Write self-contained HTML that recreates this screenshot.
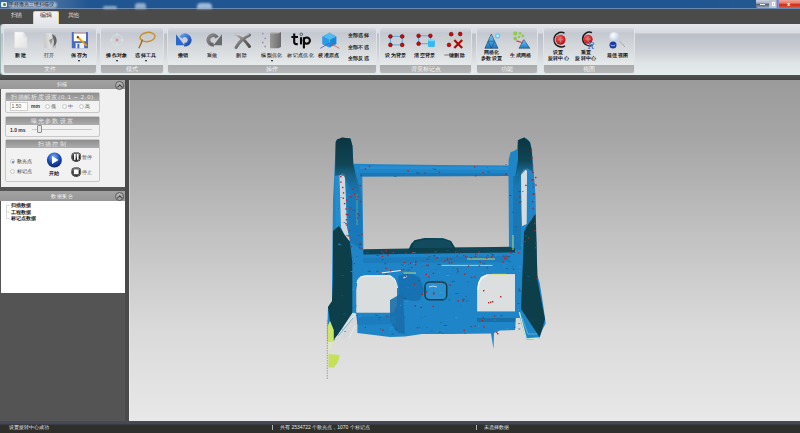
<!DOCTYPE html>
<html><head><meta charset="utf-8">
<style>
*{margin:0;padding:0;box-sizing:border-box}
html,body{width:800px;height:433px;overflow:hidden;background:#545454;font-family:"Liberation Sans",sans-serif}
.a{position:absolute}
#title{left:0;top:0;width:800px;height:9px;background:linear-gradient(90deg,#3a6a9c 0,#3f6b9d 60px,#1f5590 90px,#1f5692 240px,#1f5590 700px,#24588f 760px);border-bottom:1px solid #6a8ab0}
#tabs{left:0;top:9px;width:800px;height:15px;background:#4b4b4b}
#ribbon{left:1px;top:23.6px;width:799px;height:51.4px;border-radius:3px 0 0 3px;background:linear-gradient(#e4e6ea 0,#d8dbe0 8.5px,#babfc8 10.5px,#c9ccd2 24.5px,#dfe4e6 39.5px,#e6eded 51.4px);box-shadow:-1px 0 0 #9ab4b4}
.grp{position:absolute;top:28px;height:45px;border-radius:2px;background:linear-gradient(#d6d9de 0,#c4c8d0 5px,#d6d9dc 20px,#e6e9ea 36px);box-shadow:0 0 0 1px #dfe2e6}
.glab{position:absolute;left:0;right:0;bottom:0;height:8px;background:linear-gradient(#a9abad,#b4b6b8);color:#f4f4f4;font-size:6px;line-height:8px;text-align:center;border-radius:0 0 2px 2px}
.t{position:absolute;font-size:6px;line-height:7px;color:#222;white-space:nowrap}
#sep{left:0;top:75px;width:800px;height:5px;background:linear-gradient(#505050 0,#4c4c4c 2px,#444 5px)}
#view{left:129px;top:80px;width:671px;height:341px;background:linear-gradient(#9b9b9b 0,#a6a6a6 60px,#c3c3c3 160px,#dadada 250px,#e8e8e8 341px);border-left:1px solid rgba(255,255,255,0.35)}
#status{left:0;top:421px;width:800px;height:12px;background:linear-gradient(#474b59 0,#434756 3px,#2f302c 4px,#2e2f2b 12px)}

.ph{position:absolute;left:0;width:125px;height:9px;background:linear-gradient(#a2a2a2,#979797);color:#f8f8f8;font-size:5px;letter-spacing:0.6px;line-height:9px;text-align:center}
.pb{position:absolute;left:1px;width:124px;background:#f0f0f0}
.gb{position:absolute;left:5px;width:95px;border:1px solid #c8c8c8;border-radius:2px;background:#f2f2f2}
.gh{position:absolute;left:0;top:0;right:0;height:8px;background:linear-gradient(#8e8e8e,#adadad);color:#e8e8e8;font-size:6px;line-height:8px;text-align:center;letter-spacing:1.3px}
.circ{position:absolute;width:9px;height:9px;border:1px solid #5a5a5a;border-radius:50%;background:linear-gradient(#b8b8b8,#a0a0a0)}.circ:after{content:'';position:absolute;left:2.2px;top:3px;width:2.6px;height:2.6px;border-left:0.8px solid #444;border-top:0.8px solid #444;transform:rotate(45deg)}
.rad{position:absolute;width:5px;height:5px;border:1px solid #c8c8c8;border-radius:50%;background:#f8f8f8}

.tab{position:absolute;top:11px;height:13px;color:#d8d8d8;font-size:6px;line-height:9px;text-align:center;letter-spacing:-0.2px}
.bl{position:absolute;font-size:5px;line-height:6px;letter-spacing:0.4px;color:#101010;-webkit-text-stroke:0.15px #101010;white-space:nowrap;transform:translateX(-50%)}
.dis{color:#9a9a9a}
.arr{position:absolute;width:0;height:0;border-left:1.5px solid transparent;border-right:1.5px solid transparent;border-top:2px solid #111}
</style></head><body>
<div class="a" id="title"></div>
<div class="a" id="tabs"></div>
<div class="a" id="ribbon"></div>
<div class="a" style="left:1px;top:2px;width:6px;height:5px;background:#e8eef0;border-radius:1px"><div class="a" style="left:1.5px;top:1px;width:3px;height:3px;border-radius:50%;background:#3a8a5a"></div></div>
<div class="a" style="left:9px;top:1.5px;width:48px;height:6px;background:#b8c8dc;border-radius:3px;filter:blur(1.2px);opacity:0.85"></div><div class="a" style="left:103px;top:6px;width:14px;height:3px;background:#c0d0e0;border-radius:3px;filter:blur(1px);opacity:0.7"></div><div class="a" style="left:135px;top:3px;width:11px;height:6px;background:#b8cce0;border-radius:3px 3px 0 0;filter:blur(0.8px);opacity:0.75"></div><div class="a" style="left:197px;top:3px;width:15px;height:6px;background:#c0d4e8;border-radius:4px 4px 0 0;filter:blur(0.8px);opacity:0.8"></div>
<div class="t" style="left:9px;top:1px;color:#0a0f18;font-size:5px;line-height:7px">手持激光三维扫描仪</div>
<div class="a" style="left:756px;top:0;width:12.5px;height:7.5px;background:linear-gradient(#ccd4e0 0,#aab4c4 35%,#5a6478 55%,#7a889e 80%,#a8b4c8 100%);border-radius:0 0 0 2px"></div>
<div class="a" style="left:760px;top:3.5px;width:5px;height:1.5px;background:#fff"></div>
<div class="a" style="left:768.5px;top:0;width:11px;height:7.5px;background:linear-gradient(90deg,#b8c0cc 0,#c0c8d0 60%,#6a70c8 80%,#c8d0d8 100%)"></div>
<div class="a" style="left:771.8px;top:2px;width:3.6px;height:3.8px;border:1px solid #fff"></div>
<div class="a" style="left:779.4px;top:0;width:20.6px;height:7.5px;background:linear-gradient(#f0a898 0,#e88070 35%,#d02810 60%,#e06048 100%)"></div>
<div class="t" style="left:787px;top:-0.5px;color:#fff;font-size:6px;line-height:8px;font-weight:bold">x</div>
<div class="tab" style="left:4px;width:25px">扫描</div>
<div class="a" style="left:33px;top:11px;width:26px;height:13px;background:linear-gradient(#f2f2f6,#e4e6ea);border:1px solid #e2d27a;border-bottom:none;border-radius:2px 2px 0 0"></div>
<div class="tab" style="left:33px;width:26px;color:#2a2a2a">编辑</div>
<div class="tab" style="left:61px;width:25px">其他</div>

<div class="grp" style="left:4px;width:91.5px"><div class="glab">文件</div></div>
<div class="grp" style="left:100.5px;width:62.5px"><div class="glab">模式</div></div>
<div class="grp" style="left:167.5px;width:208.2px"><div class="glab">操作</div></div>
<div class="grp" style="left:380.2px;width:90.80000000000001px"><div class="glab">背景标记点</div></div>
<div class="grp" style="left:476.7px;width:60.80000000000001px"><div class="glab">功能</div></div>
<div class="grp" style="left:543.5px;width:90.0px"><div class="glab">视图</div></div>
<div class="bl " style="left:20.8px;top:51.8px">新建</div>
<div class="bl dis" style="left:49px;top:51.8px">打开</div>
<div class="bl " style="left:79.6px;top:51.8px">保存为</div>
<div class="bl " style="left:117px;top:51.8px">操作对象</div>
<div class="bl " style="left:146px;top:51.8px">选择工具</div>
<div class="bl " style="left:183px;top:51.8px">撤销</div>
<div class="bl dis" style="left:212.5px;top:51.8px">重做</div>
<div class="bl dis" style="left:241.7px;top:51.8px">删除</div>
<div class="bl dis" style="left:272px;top:51.8px">模型优化</div>
<div class="bl dis" style="left:300.7px;top:51.8px">标记点优化</div>
<div class="bl " style="left:329px;top:51.8px">校准原点</div>
<div class="bl " style="left:396px;top:51.8px">设为背景</div>
<div class="bl " style="left:425px;top:51.8px">清空背景</div>
<div class="bl " style="left:454.5px;top:51.8px">一键删除</div>
<div class="bl " style="left:521px;top:51.8px">生成网格</div>
<div class="bl " style="left:617.7px;top:51.8px">最佳视图</div>
<div class="bl" style="left:491.7px;top:49.2px">网格化</div><div class="bl" style="left:491.7px;top:54.8px">参数设置</div>
<div class="bl" style="left:558.5px;top:49.2px">设置</div><div class="bl" style="left:558.5px;top:54.8px">旋转中心</div>
<div class="bl" style="left:586px;top:49.2px">重置</div><div class="bl" style="left:586px;top:54.8px">旋转中心</div>
<div class="bl" style="left:358.5px;top:32px">全部选择</div>
<div class="bl" style="left:358.5px;top:43.7px">全部不选</div>
<div class="bl" style="left:358.5px;top:54.5px">全部反选</div>
<div class="arr" style="left:78.1px;top:60px"></div>
<div class="arr" style="left:115.5px;top:60px"></div>
<div class="arr" style="left:144.5px;top:60px"></div>
<div class="arr" style="left:270.5px;top:60px"></div>
<svg class="a" style="left:0;top:0" width="800" height="80" viewBox="0 0 800 80">
<defs>
<linearGradient id="gdoc" x1="0" y1="0" x2="1" y2="1"><stop offset="0" stop-color="#fbfbfb"/><stop offset="1" stop-color="#e2e2e2"/></linearGradient>
<linearGradient id="gfold" x1="0" y1="0" x2="1" y2="0"><stop offset="0" stop-color="#c8c8c8"/><stop offset="0.5" stop-color="#e0e0e0"/><stop offset="1" stop-color="#b8b8b8"/></linearGradient>
<linearGradient id="gundo" x1="0" y1="0" x2="1" y2="1"><stop offset="0" stop-color="#5a9af0"/><stop offset="1" stop-color="#1848b0"/></linearGradient>
<linearGradient id="gredo" x1="0" y1="0" x2="1" y2="1"><stop offset="0" stop-color="#8a8a8a"/><stop offset="1" stop-color="#5a5a5a"/></linearGradient>
<linearGradient id="gx" x1="0" y1="0" x2="1" y2="1"><stop offset="0" stop-color="#c0c0c0"/><stop offset="0.5" stop-color="#707070"/><stop offset="1" stop-color="#505050"/></linearGradient>
<linearGradient id="gbox" x1="0" y1="0" x2="1" y2="0"><stop offset="0" stop-color="#9a9a9a"/><stop offset="1" stop-color="#6a6a6a"/></linearGradient>
<linearGradient id="gcube" x1="0" y1="0" x2="0" y2="1"><stop offset="0" stop-color="#40b0f0"/><stop offset="1" stop-color="#1878d0"/></linearGradient>
<linearGradient id="gtri" x1="0" y1="0" x2="0" y2="1"><stop offset="0" stop-color="#70d0f8"/><stop offset="1" stop-color="#1878c8"/></linearGradient>
<radialGradient id="gred" cx="0.4" cy="0.35" r="0.7"><stop offset="0" stop-color="#ff6060"/><stop offset="1" stop-color="#c00000"/></radialGradient>
<radialGradient id="gglass" cx="0.4" cy="0.35" r="0.7"><stop offset="0" stop-color="#ffffff"/><stop offset="1" stop-color="#b8c8e0"/></radialGradient>
</defs>
<!-- new doc -->
<path d="M14.7 31.9 H23.3 L26.9 37.7 V47.7 H14.7 Z" fill="url(#gdoc)" stroke="#e6e6e6" stroke-width="0.4"/>
<path d="M23.3 31.9 V37.7 H26.9" fill="#d8d8d8" opacity="0.6"/>
<!-- open folder disabled -->
<path d="M44 33 H52 L56 35 V48.3 H44 Z" fill="url(#gfold)"/>
<path d="M52 34 Q58.5 37 56 44 L53 47 Q55 42 53 38 Z" fill="#555" opacity="0.85"/>
<path d="M49 40 L53 38 L51 45 Z" fill="#777" opacity="0.7"/>
<!-- save as floppy -->
<rect x="71.8" y="32" width="16.2" height="16.3" fill="#4a68c8" rx="0.6"/>
<rect x="73.8" y="32.6" width="12.2" height="8.6" fill="#fbfbf8"/>
<rect x="73.8" y="32.6" width="12.2" height="1.4" fill="#f0b070"/>
<rect x="75.6" y="43" width="8.6" height="5.3" fill="#eef0f8"/>
<rect x="77.4" y="43.8" width="2" height="4.5" fill="#4a68c8"/>
<path d="M77.2 36.5 L86.8 45.8" stroke="#e8a010" stroke-width="1.8"/>
<path d="M77.2 36.5 L78.5 37.8" stroke="#604020" stroke-width="1.8"/>
<!-- crosshair faint -->
<circle cx="117" cy="40" r="5.5" fill="none" stroke="#d8e0e0" stroke-width="1"/>
<path d="M117 33 V47 M110 40 H124" stroke="#dde6e6" stroke-width="0.7"/>
<circle cx="117" cy="40" r="1.5" fill="#d888a8"/>
<!-- lasso -->
<ellipse cx="147.5" cy="37" rx="7.5" ry="4.6" fill="none" stroke="#c89028" stroke-width="1.4" transform="rotate(-8 147.5 37)"/>
<path d="M142.5 39.5 Q141 44 138.8 48.3" stroke="#a06818" stroke-width="1.3" fill="none"/>
<!-- undo -->
<path d="M180.9,37.6 A4.7,4.7 0 1 1 184.2,44.6" fill="none" stroke="url(#gundo)" stroke-width="3.8"/>
<path d="M176,34.2 L176,45.3 L184.5,45.3 Z" fill="#2a68d0"/>
<!-- redo -->
<path d="M217.1,37.6 A4.7,4.7 0 1 0 213.8,44.6" fill="none" stroke="url(#gredo)" stroke-width="3.8"/>
<path d="M222,34.2 L222,45.3 L213.5,45.3 Z" fill="#6a6a6a"/>
<!-- delete X -->
<path d="M235.5,34 Q243,37.5 249.5,46.5" fill="none" stroke="url(#gx)" stroke-width="3" stroke-linecap="round"/>
<path d="M249.5,35 Q241,38.5 236,47.5" fill="none" stroke="url(#gx)" stroke-width="3" stroke-linecap="round"/>
<path d="M236,33.8 Q240,35 243,37" fill="none" stroke="#e0e0e0" stroke-width="0.8" stroke-linecap="round"/>
<path d="M248.5,34.6 Q246,35 243.5,36.5" fill="none" stroke="#d8d8d8" stroke-width="0.8" stroke-linecap="round"/>
<!-- model optimize -->
<g fill="#9a9a9a"><circle cx="262.8" cy="33.6" r="0.9"/><circle cx="265.2" cy="38.3" r="0.9"/><circle cx="262.8" cy="42.5" r="0.9"/><circle cx="265.2" cy="46.5" r="0.9"/></g>
<path d="M270 33.5 L272.5 32.1 H281 V47 L278.5 48.3 H270 Z" fill="url(#gbox)"/>
<path d="M270 33.5 L272.5 32.1 H281 L278.5 33.5 Z" fill="#b8b8b8"/>
<path d="M270 36.5 H278.5 M270 41 H278.5" stroke="#858585" stroke-width="0.4"/>
<!-- tip -->
<path d="M294.2,33.5 V42.2 Q294.2,44.3 297.8,44.1 M291.4,37 H298" stroke="#0a0a0a" stroke-width="2.1" fill="none"/>
<path d="M301,37.2 V44.4" stroke="#0a0a0a" stroke-width="2.1"/>
<circle cx="301.3" cy="34.3" r="1.3" fill="none" stroke="#505050" stroke-width="0.9"/>
<path d="M303.9,37.2 V48.4" stroke="#0a0a0a" stroke-width="2.1"/>
<circle cx="306.8" cy="40.6" r="3.1" fill="none" stroke="#0a0a0a" stroke-width="2.1"/>
<!-- cube -->
<path d="M329.5,33 L336.4,36.5 V44 L329.5,47.5 L322.5,44 V36.5 Z" fill="#1c86d8"/>
<path d="M329.5,33 L336.4,36.5 L329.5,40 L322.5,36.5 Z" fill="#4cbaf4"/>
<path d="M322.5,36.5 L329.5,40 V47.5 L322.5,44 Z" fill="#2a9ce6"/>
<path d="M329.6,32 V43" stroke="#50e060" stroke-width="0.8"/>
<path d="M329.6,43 L339.4,48.3" stroke="#e05050" stroke-width="0.8"/>
<path d="M329.6,43 L320.3,48.3" stroke="#5050d0" stroke-width="0.8"/>
<!-- set background -->
<path d="M390.4 36.4 H402.2 V44.9 H390.4 Z" fill="none" stroke="#48a8e0" stroke-width="0.9"/>
<g fill="#e00000" stroke="#400000" stroke-width="0.5"><circle cx="390.4" cy="36.4" r="1.9"/><circle cx="402.2" cy="36.4" r="1.9"/><circle cx="390.4" cy="44.9" r="1.9"/><circle cx="402.2" cy="44.9" r="1.9"/></g>
<!-- clear background -->
<path d="M418.6 35.8 H430.4 V42 M418.6 35.8 V43.7 H428" fill="none" stroke="#48a8e0" stroke-width="0.9"/>
<rect x="428" y="40" width="6.9" height="7.1" rx="1" fill="#38b8f0"/>
<ellipse cx="431.4" cy="40.3" rx="3.4" ry="1" fill="#70d8ff"/>
<g fill="#e00000" stroke="#400000" stroke-width="0.5"><circle cx="418.6" cy="35.8" r="1.9"/><circle cx="430.4" cy="35.8" r="1.9"/><circle cx="418.6" cy="43.7" r="1.9"/></g>
<!-- one-key delete -->
<g fill="#b8d870"><circle cx="447" cy="38.5" r="0.7"/><circle cx="450" cy="39.5" r="0.7"/><circle cx="453" cy="38" r="0.7"/><circle cx="457" cy="37.5" r="0.7"/><circle cx="461" cy="38.8" r="0.7"/><circle cx="452" cy="42" r="0.7"/><circle cx="462" cy="42" r="0.7"/></g>
<g fill="#e00000" stroke="#400000" stroke-width="0.5"><circle cx="451.2" cy="34.2" r="1.9"/><circle cx="460.2" cy="34" r="1.9"/><circle cx="449" cy="44.9" r="1.9"/></g>
<path d="M454.3 40 L462.2 48 M462.2 40 L454.3 48" stroke="#b00808" stroke-width="2.2"/>
<!-- mesh params -->
<path d="M491.3 34 L498 48.3 H484.9 Z" fill="url(#gtri)" stroke="#20405a" stroke-width="0.6"/>
<path d="M488.1 41.2 H494.6 L491.3 48.3 Z" fill="none" stroke="#20405a" stroke-width="0.5"/>
<circle cx="497.6" cy="35.9" r="2.6" fill="#68c8f0"/><circle cx="497.6" cy="35.9" r="1.1" fill="#f4fbff"/>
<!-- generate mesh -->
<g fill="#8ccc48"><circle cx="515.3" cy="33.6" r="2.1"/><circle cx="520.1" cy="33.3" r="1.4"/><circle cx="522.8" cy="35.9" r="1.4"/><circle cx="519" cy="37" r="1.2"/><circle cx="515.3" cy="38.6" r="1.9"/></g>
<path d="M516.5 41 Q519.5 41.5 521.5 42.5" stroke="#e04040" stroke-width="1.3" fill="none"/>
<path d="M523 40 L525.5 43 L521 44 Z" fill="#f02020"/>
<path d="M523.9 39.5 L529.9 48.3 H519 Z" fill="url(#gtri)" stroke="#20405a" stroke-width="0.5"/>
<!-- set rotation center -->
<path d="M564.5,33.2 A7.2,7.2 0 1 0 565,45.8" fill="none" stroke="#1a1a1a" stroke-width="1.5"/>
<path d="M563,35.3 A5.2,5.2 0 1 0 563.4,43.8" fill="none" stroke="#a0a0a0" stroke-width="0.7"/>
<circle cx="560.6" cy="39.8" r="4.9" fill="url(#gred)"/>
<path d="M560.6,37 V42.6 M557.8,39.8 H563.4" stroke="#b09090" stroke-width="1.1"/>
<!-- reset rotation center -->
<path d="M592,32.6 A6.8,6.8 0 1 0 592.5,45" fill="none" stroke="#1a1a1a" stroke-width="1.4"/>
<circle cx="588.1" cy="39.2" r="4.5" fill="url(#gred)"/>
<path d="M588.1,36.6 V41.8 M585.5,39.2 H590.7" stroke="#b09090" stroke-width="1"/>
<text x="587.5" y="48.8" font-family="Liberation Serif" font-style="italic" font-size="11" fill="#3a70c8">R</text>
<!-- best view -->
<path d="M619.6,41 L625,47" stroke="#a8a8a8" stroke-width="1"/>
<circle cx="614.2" cy="36.9" r="5" fill="url(#gglass)"/>
<circle cx="613" cy="45" r="3.5" fill="#1a3aa0"/>
<path d="M611,44.5 L612,46.2 L613,45 L614,46.2 L615,44.5" stroke="#e0e8ff" stroke-width="0.6" fill="none"/>
</svg>
<div class="a" id="sep"></div>
<div class="a" style="left:125px;top:80px;width:4px;height:341px;background:#4a4a4a"></div><div class="a" id="view"></div>
<!--MODEL--><svg class="a" style="left:0;top:0" width="800" height="433" viewBox="0 0 800 433">
<defs><linearGradient id="dkp" x1="0" y1="0" x2="0" y2="1"><stop offset="0" stop-color="#0c3440"/><stop offset="0.4" stop-color="#104656"/><stop offset="1" stop-color="#1f88cc" stop-opacity="0.1"/></linearGradient></defs>
<path fill-rule="evenodd" fill="#1e85c8" d="M335.7,142 L337,139.5 L340,138.8 L342.2,137.6 L347,138.2 L350.5,138.6 L352.5,146 L353.3,163.8 L380,164.2 L440,165 L508.6,165.5 L508.6,160 L510.5,152.3 L514,151 L517,149 L517.9,140.3 L521,138.5 L524.4,137.6 L528,139.5 L530,142.2 L531.8,150 L533.5,170 L535.5,195 L536.4,240 L537.3,275 L539.7,283 L543,303.9 L545.7,323.2 L541.5,331.5 L539.5,338.5 L526.3,339.9 L520,318 L516,318 L515,330 L500,330.5 L494,333 L493.5,349 L491,333.5 L450,334 L422,334 L405,336.5 L390,336.9 L357.4,333.1 L357.4,325 L356,313 L352.3,312.8 L333.3,341 L327.7,341.5 L327.5,321.7 L328,307 L332,301.4 L332,280 L333,200 L334.3,175 Z M362.3,176.4 L508.5,176 L509,247.3 L454.7,247.3 L451,241 L443,238.2 L425,238 L414.6,240.3 L408.6,249 L363.4,250 Z M339.5,176 L341.5,173.3 L344.7,174 L346.8,227 L349.9,241.8 L347.5,242 L341,227 Z M521,174 L524,168.5 L527,171 L526.5,224 L522,226 Z M356.5,290 L357.5,281 L361,276.5 L366,275.6 L390,275.6 L395,279 L397,288 L397,305 L393,312.4 L356.5,312.4 Z M477.3,292 L478,283 L481,277 L487,274.3 L515,274.3 L515,311.2 L477.3,311.2 Z"/>
<path fill="#d9dddd" d="M356.5,290 L357.5,281 L361,276.5 L366,275.6 L390,275.6 L395,279 L397,288 L397,305 L393,312.4 L356.5,312.4 Z"/><path fill="#dcdfdf" d="M477.3,292 L478,283 L481,277 L487,274.3 L515,274.3 L515,311.2 L477.3,311.2 Z"/><path fill="#d0d8dc" d="M339.5,176 L341.5,173.3 L344.7,174 L346.8,227 L349.9,241.8 L347.5,242 L341,227 Z"/><path fill="#d4dce0" d="M521,174 L524,168.5 L527,171 L526.5,224 L522,226 Z"/>
<path fill="#1a78b8" opacity="0.8" d="M363,258 L510,256 L510,262 L363,263 Z"/>
<path fill="#2a92d4" opacity="0.7" d="M360,166 L508,167 L508,170 L360,169 Z"/>
<path fill="#1870b0" opacity="0.7" d="M360,173 L508,173.5 L508,176 L360,176.4 Z"/>
<path fill="#1670b0" opacity="0.9" d="M398,276 Q410,270 420,278 L424,290 L420,300 Q408,303 399,296 Z"/>
<path fill="#1a6ea8" opacity="0.9" d="M390,300 L397,296 L403,292 L405,334 L398,333 L390,322 Z"/>
<path fill="#1a78b8" opacity="0.6" d="M357,317 L396,316 L396,324 L357,325 Z"/>
<path fill="#176aa0" opacity="0.8" d="M477,318 L515,318 L515,322 L477,322 Z"/>
<path fill="#2a96d8" opacity="0.5" d="M335,175 L339.5,176 L341,227 L336,232 Z"/>
<path fill="#1670b0" opacity="0.6" d="M346,180 L355,176 L362,200 L362,250 L350,242 Z"/>
<path fill="#1870a8" opacity="0.7" d="M513,176 L521,176 L521,250 L513,250 Z"/>
<path fill="#0d3f4b" d="M333,231 L339,226 L344,234 L349.9,241.8 L352.3,262 L352.3,312.8 L333.7,341 L333.7,330 L330,321 L328,307 L332,301 L333,280 Z"/>
<path fill="#0d3f4b" d="M524,232 L527,226 L535.5,214 L536.4,240 L537.5,280 L542,304 L545,319 L541.5,331.5 L539.5,337 L521,309 L523,260 Z"/>
<path fill="#0d3f4b" d="M408.6,250 L411,244 L414.6,240.3 L425,238 L443,238.2 L451,241 L454.7,247 L456,252 L408,253 Z"/>
<path fill="#16506a" opacity="0.7" d="M412,248 L414.6,242 L425,239.5 L443,239.5 L450,242 L453,248 Z"/>
<path fill="url(#dkp)" d="M335.7,142 L337,139.5 L342.2,137.6 L350.5,138.6 L352.5,146 L353.3,163.8 L356,176 L362,194 L362,206 L350,188 L344,176 L339,175 L335,176 Z"/>
<path fill="url(#dkp)" d="M517.9,140.3 L524.4,137.6 L530,142.2 L531.8,150 L533,172 L527,168 L521,175 L515,196 L514,182 L518,160 Z"/>
<path fill="#0d3f4b" d="M363.4,249.2 L509,246.8 L515,248.5 L515,252.5 L363.4,254.5 Z" opacity="0.92"/>
<rect x="425" y="282" width="21.7" height="17.7" rx="4.5" fill="#2a90d0" stroke="#0d3f4b" stroke-width="1.5"/>
<path d="M429,287 Q433,285 437,287" stroke="#d8eef8" stroke-width="0.8" fill="none"/>
<path d="M355,315 L357.4,325 L349,337.5 L340,339 Z" fill="#d6d8d8"/>
<path d="M356,313 L334.5,339.4" stroke="#e4f0f2" stroke-width="0.9"/><path d="M355.5,325.5 L348.5,338.2" stroke="#e0f0f4" stroke-width="1"/><path d="M353,318 L338,336" stroke="#58a8d0" stroke-width="0.8"/>
<path d="M357,283 Q358,276.5 364,276 L390,275.8 Q396,278 397.5,288" stroke="#eef6f8" stroke-width="1" fill="none"/>
<path d="M380.7,273 L401,270.5 M403.5,278 L407,276" stroke="#e8f4f8" stroke-width="1.1" fill="none"/>
<path d="M478,290 Q478.5,277 487,275.5" stroke="#f0f8f8" stroke-width="1.2" fill="none"/>
<path d="M519.4,312.2 L526.3,339 L539.5,338" stroke="#c8e8d0" stroke-width="1.3" fill="none"/><path d="M522,318 L528,334 L537,334" stroke="#60b0d0" stroke-width="1" fill="none"/>
<path fill="#cde66a" d="M327.7,341.5 L327.7,326 L330,321 L333.7,330 L333.7,341.5 Z"/><path fill="#e0ecb0" opacity="0.6" d="M327.7,341.5 H333 L331,350 H327.7 Z"/>
<path fill="#c6e05a" d="M328.5,354 L339.7,355 L338,362 L334,367.5 L328.5,367.5 Z"/>
<path d="M327.3,320 V380" stroke="#a07878" stroke-width="0.7" stroke-dasharray="1.5 1"/>
<path d="M467,259 H495 M441.6,265.4 H492.5 M403.5,273 H416 M492,274.3 H507.7 M513,235 V250" stroke="#d8e860" stroke-width="1" opacity="0.85"/><path d="M357,194 V225" stroke="#b8d860" stroke-width="0.6" opacity="0.7"/>
<g opacity="0.8"><rect x="426.5" y="259.2" width="3" height="0.8" fill="#176ca8"/><rect x="437.6" y="263.9" width="3" height="0.8" fill="#0f4a60"/><rect x="462.0" y="298.8" width="3" height="0.8" fill="#135a80"/><rect x="344.4" y="331.0" width="1.5" height="0.8" fill="#176ca8"/><rect x="460.6" y="305.4" width="1" height="0.8" fill="#135a80"/><rect x="343.1" y="313.5" width="3" height="0.8" fill="#135a80"/><rect x="401.3" y="264.5" width="1.5" height="0.8" fill="#0f4a60"/><rect x="391.6" y="333.6" width="2" height="0.8" fill="#135a80"/><rect x="393.8" y="175.9" width="3" height="0.8" fill="#135a80"/><rect x="357.6" y="213.5" width="1" height="0.8" fill="#135a80"/><rect x="505.5" y="164.1" width="1" height="0.8" fill="#0f4a60"/><rect x="430.0" y="330.7" width="3" height="0.8" fill="#176ca8"/><rect x="350.6" y="271.0" width="2" height="0.8" fill="#3aa0e0"/><rect x="353.4" y="220.5" width="1" height="0.8" fill="#176ca8"/><rect x="338.2" y="243.0" width="1.5" height="0.8" fill="#176ca8"/><rect x="437.8" y="331.5" width="3" height="0.8" fill="#0f4a60"/><rect x="390.0" y="329.1" width="1" height="0.8" fill="#3aa0e0"/><rect x="506.9" y="273.1" width="1" height="0.8" fill="#135a80"/><rect x="533.9" y="200.3" width="1" height="0.8" fill="#3aa0e0"/><rect x="354.0" y="263.1" width="1" height="0.8" fill="#0f4a60"/><rect x="426.6" y="327.1" width="1.5" height="0.8" fill="#176ca8"/><rect x="509.3" y="195.1" width="2" height="0.8" fill="#0f4a60"/><rect x="517.7" y="303.0" width="1.5" height="0.8" fill="#0f4a60"/><rect x="367.7" y="270.9" width="3" height="0.8" fill="#0f4a60"/><rect x="512.4" y="266.6" width="1" height="0.8" fill="#176ca8"/><rect x="356.8" y="170.6" width="1.5" height="0.8" fill="#3aa0e0"/><rect x="420.2" y="317.8" width="2" height="0.8" fill="#176ca8"/><rect x="440.0" y="322.0" width="1.5" height="0.8" fill="#135a80"/><rect x="381.7" y="259.1" width="2" height="0.8" fill="#135a80"/><rect x="378.5" y="319.5" width="1" height="0.8" fill="#135a80"/><rect x="348.1" y="194.0" width="1.5" height="0.8" fill="#3aa0e0"/><rect x="354.4" y="187.5" width="2" height="0.8" fill="#176ca8"/><rect x="467.4" y="281.5" width="1" height="0.8" fill="#0f4a60"/><rect x="520.7" y="244.7" width="2" height="0.8" fill="#3aa0e0"/><rect x="528.6" y="167.6" width="3" height="0.8" fill="#135a80"/><rect x="349.5" y="216.9" width="1" height="0.8" fill="#0f4a60"/><rect x="351.1" y="256.8" width="1.5" height="0.8" fill="#135a80"/><rect x="494.7" y="319.6" width="1" height="0.8" fill="#3aa0e0"/><rect x="473.0" y="317.1" width="1" height="0.8" fill="#176ca8"/><rect x="508.7" y="261.4" width="3" height="0.8" fill="#176ca8"/><rect x="452.5" y="267.5" width="1" height="0.8" fill="#135a80"/><rect x="463.9" y="332.9" width="2" height="0.8" fill="#176ca8"/><rect x="413.7" y="289.0" width="3" height="0.8" fill="#176ca8"/><rect x="428.5" y="256.0" width="2" height="0.8" fill="#135a80"/><rect x="435.5" y="268.5" width="2" height="0.8" fill="#176ca8"/><rect x="515.3" y="226.6" width="1.5" height="0.8" fill="#0f4a60"/><rect x="439.7" y="292.1" width="3" height="0.8" fill="#3aa0e0"/><rect x="462.8" y="300.6" width="1.5" height="0.8" fill="#0f4a60"/><rect x="412.9" y="263.1" width="1.5" height="0.8" fill="#3aa0e0"/><rect x="478.2" y="325.5" width="1.5" height="0.8" fill="#3aa0e0"/><rect x="358.6" y="244.1" width="3" height="0.8" fill="#0f4a60"/><rect x="412.5" y="252.4" width="3" height="0.8" fill="#3aa0e0"/><rect x="400.1" y="304.9" width="1" height="0.8" fill="#3aa0e0"/><rect x="406.8" y="274.4" width="1.5" height="0.8" fill="#135a80"/><rect x="532.8" y="183.6" width="2" height="0.8" fill="#135a80"/><rect x="527.7" y="280.4" width="3" height="0.8" fill="#0f4a60"/><rect x="487.0" y="254.9" width="1.5" height="0.8" fill="#135a80"/><rect x="443.9" y="325.0" width="3" height="0.8" fill="#0f4a60"/><rect x="514.5" y="230.0" width="3" height="0.8" fill="#176ca8"/><rect x="375.4" y="314.8" width="3" height="0.8" fill="#135a80"/><rect x="446.0" y="275.0" width="3" height="0.8" fill="#3aa0e0"/><rect x="401.3" y="331.0" width="1" height="0.8" fill="#135a80"/><rect x="378.7" y="317.0" width="2" height="0.8" fill="#135a80"/><rect x="443.4" y="298.4" width="2" height="0.8" fill="#3aa0e0"/><rect x="518.0" y="309.5" width="1" height="0.8" fill="#3aa0e0"/><rect x="343.4" y="222.1" width="2" height="0.8" fill="#176ca8"/><rect x="433.5" y="168.8" width="3" height="0.8" fill="#135a80"/><rect x="403.0" y="297.9" width="3" height="0.8" fill="#0f4a60"/><rect x="365.7" y="251.8" width="3" height="0.8" fill="#176ca8"/><rect x="451.8" y="281.1" width="3" height="0.8" fill="#0f4a60"/><rect x="481.8" y="272.6" width="2" height="0.8" fill="#3aa0e0"/><rect x="470.3" y="326.3" width="2" height="0.8" fill="#0f4a60"/><rect x="506.2" y="328.6" width="3" height="0.8" fill="#3aa0e0"/><rect x="376.2" y="255.1" width="3" height="0.8" fill="#135a80"/><rect x="341.6" y="328.8" width="1" height="0.8" fill="#176ca8"/><rect x="434.2" y="281.5" width="3" height="0.8" fill="#135a80"/><rect x="418.8" y="326.7" width="2" height="0.8" fill="#176ca8"/><rect x="403.9" y="317.2" width="2" height="0.8" fill="#176ca8"/><rect x="357.7" y="235.3" width="2" height="0.8" fill="#135a80"/><rect x="340.6" y="197.0" width="1" height="0.8" fill="#0f4a60"/><rect x="407.1" y="269.4" width="3" height="0.8" fill="#135a80"/><rect x="375.5" y="254.2" width="1" height="0.8" fill="#176ca8"/><rect x="376.9" y="271.3" width="1.5" height="0.8" fill="#0f4a60"/><rect x="506.3" y="268.0" width="1.5" height="0.8" fill="#0f4a60"/><rect x="519.0" y="270.7" width="1.5" height="0.8" fill="#3aa0e0"/><rect x="520.6" y="201.1" width="1" height="0.8" fill="#0f4a60"/><rect x="355.4" y="305.5" width="1.5" height="0.8" fill="#176ca8"/><rect x="376.1" y="270.8" width="1" height="0.8" fill="#135a80"/><rect x="518.3" y="328.6" width="2" height="0.8" fill="#135a80"/><rect x="436.6" y="280.6" width="1" height="0.8" fill="#0f4a60"/><rect x="432.4" y="168.1" width="1.5" height="0.8" fill="#176ca8"/><rect x="355.3" y="230.5" width="2" height="0.8" fill="#176ca8"/><rect x="422.0" y="266.2" width="1" height="0.8" fill="#135a80"/><rect x="426.8" y="289.7" width="1.5" height="0.8" fill="#176ca8"/><rect x="353.0" y="307.1" width="1.5" height="0.8" fill="#176ca8"/><rect x="436.9" y="331.1" width="2" height="0.8" fill="#3aa0e0"/><rect x="518.3" y="290.6" width="3" height="0.8" fill="#0f4a60"/><rect x="356.2" y="315.0" width="1.5" height="0.8" fill="#135a80"/><rect x="390.6" y="327.4" width="2" height="0.8" fill="#3aa0e0"/><rect x="415.1" y="261.7" width="1" height="0.8" fill="#135a80"/><rect x="416.3" y="172.6" width="3" height="0.8" fill="#0f4a60"/><rect x="338.2" y="208.0" width="2" height="0.8" fill="#3aa0e0"/><rect x="446.0" y="250.3" width="3" height="0.8" fill="#135a80"/><rect x="455.5" y="293.1" width="3" height="0.8" fill="#135a80"/><rect x="522.0" y="191.2" width="1.5" height="0.8" fill="#176ca8"/><rect x="507.1" y="256.1" width="3" height="0.8" fill="#135a80"/><rect x="525.1" y="235.5" width="2" height="0.8" fill="#176ca8"/><rect x="467.0" y="259.3" width="2" height="0.8" fill="#3aa0e0"/><rect x="341.4" y="295.3" width="1.5" height="0.8" fill="#135a80"/><rect x="417.8" y="280.3" width="2" height="0.8" fill="#135a80"/><rect x="485.7" y="172.5" width="1" height="0.8" fill="#3aa0e0"/><rect x="487.1" y="171.7" width="3" height="0.8" fill="#135a80"/><rect x="364.9" y="327.2" width="1" height="0.8" fill="#0f4a60"/><rect x="346.1" y="234.9" width="1.5" height="0.8" fill="#135a80"/><rect x="456.2" y="272.7" width="2" height="0.8" fill="#176ca8"/><rect x="491.6" y="254.2" width="2" height="0.8" fill="#0f4a60"/><rect x="358.8" y="315.8" width="2" height="0.8" fill="#3aa0e0"/><rect x="449.0" y="264.6" width="1.5" height="0.8" fill="#3aa0e0"/><rect x="531.9" y="319.7" width="1" height="0.8" fill="#135a80"/><rect x="337.9" y="208.1" width="1" height="0.8" fill="#135a80"/><rect x="356.5" y="256.1" width="1" height="0.8" fill="#135a80"/><rect x="518.6" y="191.3" width="2" height="0.8" fill="#0f4a60"/><rect x="503.3" y="265.4" width="1.5" height="0.8" fill="#3aa0e0"/><rect x="355.4" y="312.8" width="1" height="0.8" fill="#135a80"/><rect x="422.4" y="260.6" width="2" height="0.8" fill="#176ca8"/><rect x="500.7" y="165.6" width="1.5" height="0.8" fill="#3aa0e0"/><rect x="518.1" y="266.6" width="3" height="0.8" fill="#3aa0e0"/><rect x="407.6" y="287.4" width="1" height="0.8" fill="#3aa0e0"/><rect x="455.0" y="317.4" width="3" height="0.8" fill="#3aa0e0"/><rect x="442.0" y="332.7" width="2" height="0.8" fill="#176ca8"/><rect x="380.2" y="328.5" width="1" height="0.8" fill="#0f4a60"/><rect x="448.8" y="299.5" width="1.5" height="0.8" fill="#0f4a60"/><rect x="512.2" y="211.8" width="1.5" height="0.8" fill="#135a80"/><rect x="439.1" y="256.5" width="1" height="0.8" fill="#3aa0e0"/><rect x="466.2" y="300.7" width="2" height="0.8" fill="#135a80"/><rect x="352.3" y="289.3" width="1" height="0.8" fill="#3aa0e0"/><rect x="341.2" y="275.1" width="3" height="0.8" fill="#135a80"/><rect x="489.1" y="252.7" width="3" height="0.8" fill="#176ca8"/><rect x="406.1" y="301.2" width="1.5" height="0.8" fill="#3aa0e0"/><rect x="434.7" y="255.3" width="1" height="0.8" fill="#135a80"/><rect x="418.1" y="304.5" width="1" height="0.8" fill="#3aa0e0"/><rect x="513.7" y="326.8" width="2" height="0.8" fill="#135a80"/><rect x="534.2" y="227.8" width="2" height="0.8" fill="#0f4a60"/><rect x="394.4" y="328.9" width="3" height="0.8" fill="#135a80"/><rect x="465.6" y="295.9" width="1" height="0.8" fill="#0f4a60"/><rect x="486.6" y="166.9" width="1" height="0.8" fill="#176ca8"/><rect x="407.9" y="264.0" width="1.5" height="0.8" fill="#176ca8"/><rect x="424.4" y="316.1" width="1.5" height="0.8" fill="#176ca8"/><rect x="518.1" y="323.3" width="2" height="0.8" fill="#176ca8"/><rect x="527.1" y="276.2" width="3" height="0.8" fill="#135a80"/><rect x="495.7" y="329.9" width="1" height="0.8" fill="#3aa0e0"/><rect x="338.2" y="244.3" width="3" height="0.8" fill="#3aa0e0"/><rect x="439.2" y="272.3" width="1" height="0.8" fill="#3aa0e0"/><rect x="336.3" y="303.6" width="1.5" height="0.8" fill="#0f4a60"/><rect x="352.5" y="209.9" width="3" height="0.8" fill="#135a80"/></g>
<g fill="#c02020"><rect x="475.0" y="253.4" width="1.4" height="1.4"/><rect x="465.3" y="255.8" width="1.4" height="1.4"/><rect x="425.7" y="252.9" width="1.4" height="1.4"/><rect x="504.1" y="257.6" width="1.4" height="1.4"/><rect x="411.5" y="252.1" width="1.4" height="1.4"/><rect x="446.8" y="258.0" width="1.4" height="1.4"/><rect x="463.1" y="254.8" width="1.4" height="1.4"/><rect x="474.8" y="255.8" width="1.4" height="1.4"/><rect x="382.9" y="252.5" width="1.4" height="1.4"/><rect x="492.0" y="255.1" width="1.4" height="1.4"/><rect x="434.9" y="250.9" width="1.4" height="1.4"/><rect x="381.7" y="255.7" width="1.4" height="1.4"/><rect x="490.8" y="256.4" width="1.4" height="1.4"/><rect x="470.7" y="257.0" width="1.4" height="1.4"/><rect x="387.4" y="254.3" width="1.4" height="1.4"/><rect x="502.8" y="255.5" width="1.4" height="1.4"/><rect x="505.3" y="255.5" width="1.4" height="1.4"/><rect x="392.7" y="251.8" width="1.4" height="1.4"/><rect x="381.1" y="251.1" width="1.4" height="1.4"/><rect x="405.2" y="252.7" width="1.4" height="1.4"/><rect x="459.1" y="252.5" width="1.4" height="1.4"/><rect x="433.1" y="255.0" width="1.4" height="1.4"/><rect x="510.1" y="252.3" width="1.4" height="1.4"/><rect x="478.4" y="251.4" width="1.4" height="1.4"/><rect x="486.0" y="257.3" width="1.4" height="1.4"/><rect x="385.4" y="250.1" width="1.4" height="1.4"/><rect x="386.8" y="254.9" width="1.4" height="1.4"/><rect x="436.0" y="257.2" width="1.4" height="1.4"/><rect x="456.6" y="255.3" width="1.4" height="1.4"/><rect x="455.1" y="251.2" width="1.4" height="1.4"/><rect x="483.3" y="262.9" width="1.4" height="1.4"/><rect x="512.8" y="268.6" width="1.4" height="1.4"/><rect x="404.1" y="261.8" width="1.4" height="1.4"/><rect x="411.0" y="266.8" width="1.4" height="1.4"/><rect x="448.6" y="262.1" width="1.4" height="1.4"/><rect x="414.9" y="263.9" width="1.4" height="1.4"/><rect x="380.4" y="272.3" width="1.4" height="1.4"/><rect x="403.1" y="268.8" width="1.4" height="1.4"/><rect x="409.8" y="262.7" width="1.4" height="1.4"/><rect x="456.8" y="268.3" width="1.4" height="1.4"/><rect x="451.1" y="262.0" width="1.4" height="1.4"/><rect x="471.0" y="276.7" width="1.4" height="1.4"/><rect x="450.1" y="258.5" width="1.4" height="1.4"/><rect x="463.9" y="273.5" width="1.4" height="1.4"/><rect x="385.4" y="267.6" width="1.4" height="1.4"/><rect x="427.6" y="264.7" width="1.4" height="1.4"/><rect x="404.9" y="275.7" width="1.4" height="1.4"/><rect x="432.8" y="272.6" width="1.4" height="1.4"/><rect x="400.8" y="269.4" width="1.4" height="1.4"/><rect x="446.9" y="259.3" width="1.4" height="1.4"/><rect x="502.3" y="261.4" width="1.4" height="1.4"/><rect x="415.2" y="260.9" width="1.4" height="1.4"/><rect x="505.1" y="258.1" width="1.4" height="1.4"/><rect x="467.8" y="265.3" width="1.4" height="1.4"/><rect x="478.7" y="265.3" width="1.4" height="1.4"/><rect x="389.9" y="270.0" width="1.4" height="1.4"/><rect x="486.7" y="267.1" width="1.4" height="1.4"/><rect x="425.5" y="273.7" width="1.4" height="1.4"/><rect x="385.7" y="273.1" width="1.4" height="1.4"/><rect x="457.3" y="270.8" width="1.4" height="1.4"/><rect x="479.5" y="261.2" width="1.4" height="1.4"/><rect x="426.8" y="258.7" width="1.4" height="1.4"/><rect x="444.2" y="260.4" width="1.4" height="1.4"/><rect x="425.9" y="264.7" width="1.4" height="1.4"/><rect x="384.7" y="262.9" width="1.4" height="1.4"/><rect x="482.6" y="316.9" width="1.4" height="1.4"/><rect x="439.6" y="280.9" width="1.4" height="1.4"/><rect x="416.8" y="327.0" width="1.4" height="1.4"/><rect x="426.0" y="291.3" width="1.4" height="1.4"/><rect x="500.8" y="315.0" width="1.4" height="1.4"/><rect x="382.2" y="329.5" width="1.4" height="1.4"/><rect x="414.6" y="305.2" width="1.4" height="1.4"/><rect x="428.1" y="276.4" width="1.4" height="1.4"/><rect x="457.4" y="300.1" width="1.4" height="1.4"/><rect x="421.5" y="293.7" width="1.4" height="1.4"/><rect x="483.4" y="326.2" width="1.4" height="1.4"/><rect x="496.0" y="331.4" width="1.4" height="1.4"/><rect x="436.4" y="281.1" width="1.4" height="1.4"/><rect x="463.5" y="329.5" width="1.4" height="1.4"/><rect x="497.0" y="333.0" width="1.4" height="1.4"/><rect x="474.6" y="325.5" width="1.4" height="1.4"/><rect x="420.3" y="306.7" width="1.4" height="1.4"/><rect x="449.6" y="284.5" width="1.4" height="1.4"/><rect x="462.4" y="299.5" width="1.4" height="1.4"/><rect x="442.9" y="282.5" width="1.4" height="1.4"/><rect x="433.0" y="292.2" width="1.4" height="1.4"/><rect x="474.2" y="276.4" width="1.4" height="1.4"/><rect x="432.5" y="305.8" width="1.4" height="1.4"/><rect x="386.2" y="315.2" width="1.4" height="1.4"/><rect x="433.2" y="293.2" width="1.4" height="1.4"/><rect x="413.7" y="283.3" width="1.4" height="1.4"/><rect x="481.5" y="320.0" width="1.4" height="1.4"/><rect x="493.9" y="315.2" width="1.4" height="1.4"/><rect x="488.0" y="302.0" width="1.4" height="1.4"/><rect x="490.0" y="301.5" width="1.4" height="1.4"/><rect x="492.0" y="301.0" width="1.4" height="1.4"/><rect x="483.0" y="290.0" width="1.4" height="1.4"/><rect x="500.0" y="296.0" width="1.4" height="1.4"/><rect x="346.0" y="199.4" width="1.4" height="1.4"/><rect x="359.6" y="242.6" width="1.4" height="1.4"/><rect x="345.3" y="223.0" width="1.4" height="1.4"/><rect x="356.9" y="217.4" width="1.4" height="1.4"/><rect x="354.1" y="193.5" width="1.4" height="1.4"/><rect x="361.1" y="248.2" width="1.4" height="1.4"/><rect x="356.1" y="198.6" width="1.4" height="1.4"/><rect x="358.9" y="247.1" width="1.4" height="1.4"/><rect x="349.7" y="207.1" width="1.4" height="1.4"/><rect x="359.9" y="200.8" width="1.4" height="1.4"/><rect x="361.3" y="233.6" width="1.4" height="1.4"/><rect x="352.1" y="188.5" width="1.4" height="1.4"/><rect x="359.6" y="184.9" width="1.4" height="1.4"/><rect x="356.7" y="195.9" width="1.4" height="1.4"/><rect x="357.2" y="213.1" width="1.4" height="1.4"/><rect x="350.0" y="196.2" width="1.4" height="1.4"/><rect x="358.7" y="214.8" width="1.4" height="1.4"/><rect x="347.0" y="214.2" width="1.4" height="1.4"/><rect x="536.5" y="278.1" width="1.4" height="1.4"/><rect x="519.0" y="201.8" width="1.4" height="1.4"/><rect x="517.9" y="252.1" width="1.4" height="1.4"/><rect x="525.2" y="184.7" width="1.4" height="1.4"/><rect x="535.2" y="184.4" width="1.4" height="1.4"/><rect x="535.0" y="176.8" width="1.4" height="1.4"/><rect x="527.9" y="237.2" width="1.4" height="1.4"/><rect x="524.3" y="240.8" width="1.4" height="1.4"/><rect x="518.6" y="288.7" width="1.4" height="1.4"/><rect x="519.2" y="196.4" width="1.4" height="1.4"/><rect x="531.2" y="179.3" width="1.4" height="1.4"/><rect x="532.4" y="193.2" width="1.4" height="1.4"/><rect x="534.8" y="246.9" width="1.4" height="1.4"/><rect x="535.2" y="242.7" width="1.4" height="1.4"/><rect x="360.4" y="174.8" width="1.4" height="1.4"/><rect x="368.9" y="165.7" width="1.4" height="1.4"/><rect x="475.0" y="175.0" width="1.4" height="1.4"/><rect x="407.5" y="170.3" width="1.4" height="1.4"/><rect x="364.7" y="168.2" width="1.4" height="1.4"/><rect x="482.4" y="172.0" width="1.4" height="1.4"/><rect x="505.5" y="173.2" width="1.4" height="1.4"/><rect x="438.7" y="171.5" width="1.4" height="1.4"/><rect x="474.1" y="166.2" width="1.4" height="1.4"/><rect x="424.5" y="172.4" width="1.4" height="1.4"/><rect x="340.1" y="176.0" width="1.4" height="1.4"/><rect x="340.3" y="181.4" width="1.4" height="1.4"/><rect x="342.0" y="186.8" width="1.4" height="1.4"/><rect x="342.8" y="192.2" width="1.4" height="1.4"/><rect x="342.6" y="197.5" width="1.4" height="1.4"/><rect x="343.9" y="202.9" width="1.4" height="1.4"/><rect x="345.3" y="208.3" width="1.4" height="1.4"/><rect x="345.6" y="213.7" width="1.4" height="1.4"/><rect x="345.7" y="219.1" width="1.4" height="1.4"/><rect x="346.3" y="224.5" width="1.4" height="1.4"/><rect x="348.6" y="229.8" width="1.4" height="1.4"/><rect x="347.6" y="235.2" width="1.4" height="1.4"/><rect x="349.1" y="240.6" width="1.4" height="1.4"/><rect x="350.8" y="246.0" width="1.4" height="1.4"/><rect x="530.7" y="150.0" width="1.4" height="1.4"/><rect x="531.5" y="157.3" width="1.4" height="1.4"/><rect x="531.8" y="164.5" width="1.4" height="1.4"/><rect x="532.4" y="171.8" width="1.4" height="1.4"/><rect x="532.1" y="179.1" width="1.4" height="1.4"/><rect x="532.8" y="186.4" width="1.4" height="1.4"/><rect x="533.3" y="193.6" width="1.4" height="1.4"/><rect x="532.0" y="200.9" width="1.4" height="1.4"/><rect x="532.4" y="208.2" width="1.4" height="1.4"/><rect x="532.8" y="215.5" width="1.4" height="1.4"/><rect x="534.0" y="222.7" width="1.4" height="1.4"/><rect x="534.2" y="230.0" width="1.4" height="1.4"/></g>
</svg><!--/MODEL--><div class="a" id="status"></div>
<div class="pb" style="top:80px;height:107px"></div>
<div class="ph" style="top:80px">扫描</div>
<div class="circ" style="left:115px;top:81px"></div>
<div class="gb" style="top:92px;height:21px"><div class="gh" style="letter-spacing:0.75px">扫描解析度设置(0.1 ~ 2.0)</div></div>
<div class="a" style="left:10px;top:102px;width:18px;height:9px;background:#fff;border:1px solid #d0d0d0"></div>
<div class="t" style="left:11.5px;top:103px;color:#555;font-size:5px">1.50</div>
<div class="t" style="left:31px;top:103px;font-size:5px;font-weight:bold;color:#333">mm</div>
<div class="rad" style="left:45px;top:104px"></div><div class="t" style="left:51px;top:102.5px;color:#555;font-size:5px;line-height:7px">低</div>
<div class="rad" style="left:62px;top:104px"></div><div class="t" style="left:68px;top:102.5px;color:#555;font-size:5px;line-height:7px">中</div>
<div class="rad" style="left:79px;top:104px"></div><div class="t" style="left:85px;top:102.5px;color:#555;font-size:5px;line-height:7px">高</div>
<div class="gb" style="top:116px;height:21px"><div class="gh">曝光参数设置</div></div>
<div class="t" style="left:10px;top:126.5px;font-size:5px;font-weight:bold;color:#333">1.0 ms</div>
<div class="a" style="left:32px;top:129px;width:60px;height:1px;background:#c8c8c8"></div>
<div class="a" style="left:37px;top:125px;width:5px;height:8px;background:#e8e8e8;border:1px solid #909090;border-radius:1px"></div>
<div class="gb" style="top:139px;height:43px"><div class="gh">扫描控制</div></div>
<div class="pb" style="top:201px;height:92px;background:#fff"></div>
<div class="ph" style="top:191px;height:10px;line-height:10px">数据集合</div>
<div class="circ" style="left:115px;top:192px"></div>


<div class="rad" style="left:10px;top:159px;background:#fff"><div class="a" style="left:0.5px;top:0.5px;width:2px;height:2px;border-radius:50%;background:#3a78b8"></div></div>
<div class="t" style="left:17px;top:158px;font-size:5px;letter-spacing:0.2px">散光点</div>
<div class="rad" style="left:10px;top:169px"></div>
<div class="t" style="left:17px;top:168px;font-size:5px;letter-spacing:0.2px">标记点</div>
<div class="t" style="left:48.5px;top:169.5px;font-size:5px;letter-spacing:0.6px;color:#111;font-weight:bold">开始</div>
<div class="t" style="left:82px;top:154px;font-size:5px;letter-spacing:0.4px;color:#555">暂停</div>
<div class="t" style="left:82px;top:169px;font-size:5px;letter-spacing:0.4px;color:#555">停止</div>
<svg class="a" style="left:0;top:140px" width="125" height="50" viewBox="0 140 125 50">
<defs>
<radialGradient id="gplay" cx="0.45" cy="0.3" r="0.75"><stop offset="0" stop-color="#7ab0f8"/><stop offset="0.55" stop-color="#1a4ab8"/><stop offset="1" stop-color="#0a1e60"/></radialGradient>
<radialGradient id="gblk" cx="0.5" cy="0.3" r="0.75"><stop offset="0" stop-color="#909090"/><stop offset="0.5" stop-color="#202020"/><stop offset="1" stop-color="#000"/></radialGradient>
</defs>
<circle cx="54.4" cy="160" r="7.5" fill="url(#gplay)"/>
<path d="M52 156 L58.5 160 L52 164 Z" fill="#fff"/>
<circle cx="76.2" cy="156.9" r="5" fill="url(#gblk)"/>
<circle cx="76.2" cy="156.9" r="4.3" fill="none" stroke="#d0d0d0" stroke-width="0.5"/><rect x="74" y="154" width="1.6" height="5.8" fill="#fff"/><rect x="77" y="154" width="1.6" height="5.8" fill="#fff"/>
<circle cx="76.2" cy="171.9" r="5" fill="url(#gblk)"/>
<circle cx="76.2" cy="171.9" r="4.3" fill="none" stroke="#d0d0d0" stroke-width="0.5"/><rect x="73.8" y="169.5" width="4.8" height="4.8" fill="#fff"/>
</svg>
<svg class="a" style="left:0;top:200px" width="40" height="24" viewBox="0 200 40 24">
<path d="M6.5 205.3 V218.7 M6.5 205.3 H10 M6.5 212 H10 M6.5 218.7 H10" stroke="#a0a0a0" stroke-width="0.6" stroke-dasharray="1 0.6"/>
</svg>
<div class="t" style="left:11px;top:202px;font-size:5px;font-weight:bold">扫描数据</div>
<div class="t" style="left:11px;top:208.5px;font-size:5px;font-weight:bold">工程数据</div>
<div class="t" style="left:11px;top:215.2px;font-size:5px;font-weight:bold">标记点数据</div>
<div class="t" style="left:9px;top:423px;font-size:5px;color:#e8e8e8;line-height:8px">设置旋转中心成功</div>
<div class="a" style="left:272px;top:425px;width:1px;height:5px;background:#b0b0b0"></div>
<div class="t" style="left:280px;top:423px;font-size:5px;color:#e8e8e8;line-height:8px">共有 2534722 个散光点，1070 个标记点</div>
<div class="a" style="left:476px;top:425px;width:1px;height:5px;background:#b0b0b0"></div>
<div class="t" style="left:484px;top:423px;font-size:5px;color:#e8e8e8;line-height:8px">未选择数据</div>
</body></html>
